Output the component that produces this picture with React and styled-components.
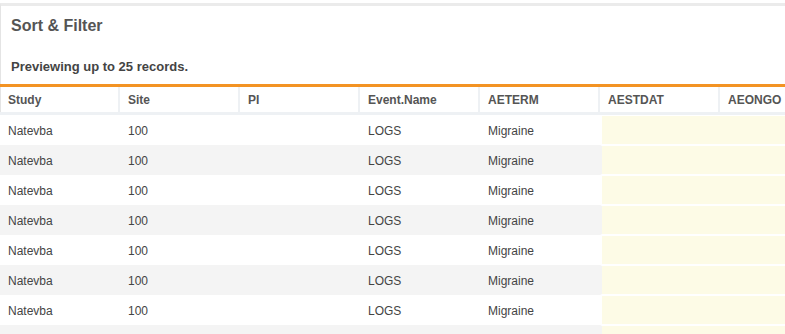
import React from 'react';
import styled, { createGlobalStyle } from 'styled-components';

const GlobalStyle = createGlobalStyle`
  html, body {
    margin: 0;
    padding: 0;
    background: #fff;
    font-family: "Liberation Sans", Arial, sans-serif;
    overflow: hidden;
  }
`;

const Page = styled.div`
  padding-top: 3px;
  width: 785px;
  height: 334px;
  overflow: hidden;
  box-sizing: border-box;
`;

const Panel = styled.div`
  border-top: 3px solid #ebebeb;
  border-left: 1px solid #e4e4e4;
  background: #fff;
`;

const Title = styled.h2`
  margin: 0;
  padding: 11px 10px 0;
  height: 34px;
  box-sizing: border-box;
  font-size: 16px;
  font-weight: bold;
  color: #555;
`;

const Note = styled.p`
  margin: 0;
  padding: 19px 10px 0;
  height: 44px;
  box-sizing: border-box;
  font-size: 13px;
  font-weight: bold;
  color: #444;
`;

const Grid = styled.table`
  border-top: 3px solid #f39323;
  border-collapse: separate;
  border-spacing: 0;
  table-layout: fixed;
  width: 840px;
  margin-left: -1px;
`;

const HeadCell = styled.th`
  width: 120px;
  height: 28px;
  box-sizing: border-box;
  padding: 0 8px;
  text-align: left;
  font-size: 12px;
  font-weight: bold;
  color: #555;
  border-right: 2px solid #eef1f4;
  border-bottom: 3px solid #eef1f4;
`;

const Row = styled.tr`
  background: ${p => (p.$odd ? '#f4f4f4' : '#fff')};
`;

const Cell = styled.td`
  height: 30px;
  box-sizing: border-box;
  padding: 1px 8px 0;
  font-size: 12px;
  color: #444;
  white-space: nowrap;
  ${p => p.$blank && `
    background: #fdfbe6;
    background-clip: padding-box;
    border-top: 1px solid #fff;
    border-bottom: 1px solid #fff;
  `}
  ${p => p.$first && `
    border-left: 2px solid transparent;
  `}
`;

const columns = ['Study', 'Site', 'PI', 'Event.Name', 'AETERM', 'AESTDAT', 'AEONGO'];
const rows = [
  ...Array.from({ length: 7 }, () => ['Natevba', '100', '', 'LOGS', 'Migraine']),
  [],
];

export default function App() {
  return (
    <Page>
      <GlobalStyle />
      <Panel>
        <Title>Sort &amp; Filter</Title>
        <Note>Previewing up to 25 records.</Note>
        <Grid>
          <thead>
            <tr>
              {columns.map(c => <HeadCell key={c}>{c}</HeadCell>)}
            </tr>
          </thead>
          <tbody>
            {rows.map((r, i) => (
              <Row key={i} $odd={i % 2 === 1}>
                {columns.map((c, j) => (
                  <Cell key={c} $blank={j >= 5} $first={j === 5}>{r[j] || ''}</Cell>
                ))}
              </Row>
            ))}
          </tbody>
        </Grid>
      </Panel>
    </Page>
  );
}
